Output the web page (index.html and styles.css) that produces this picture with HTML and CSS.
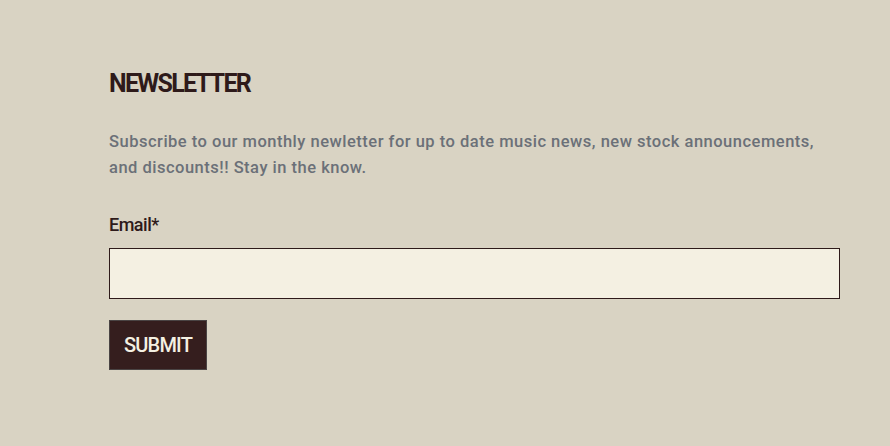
FILE: index.html
```html
<!DOCTYPE html>
<html>
<head>
<meta charset="utf-8">
<link rel="stylesheet" href="styles.css">
</head>
<body>
<section class="newsletter">
  <h2 class="title">NEWSLETTER</h2>
  <p class="lead">Subscribe to our monthly newletter for up to date music news, new stock announcements, and discounts!! Stay in the know.</p>
  <form class="form">
    <label class="label" for="email">Email*</label>
    <input class="input" id="email" type="email">
    <button class="btn" type="button">SUBMIT</button>
  </form>
</section>
</body>
</html>
```
FILE: styles.css
```css
html, body {
  margin: 0;
  padding: 0;
  background: #d9d3c3;
}
body {
  font-family: Roboto, "Liberation Sans", sans-serif;
}
.newsletter {
  padding: 68px 50px 0 109px;
}
.title {
  margin: 0;
  font-size: 25px;
  line-height: 32px;
  font-weight: 700;
  letter-spacing: -1.7px;
  color: #2e1a1a;
}
.lead {
  margin: 29px 0 0;
  max-width: 731px;
  font-size: 16.5px;
  line-height: 26px;
  font-weight: 500;
  letter-spacing: 0.5px;
  color: #6b7078;
}
.form {
  display: flex;
  flex-direction: column;
  align-items: flex-start;
  margin-top: 31px;
}
.label {
  font-size: 18px;
  line-height: 26px;
  font-weight: 500;
  letter-spacing: -0.5px;
  color: #2e1a1a;
}
.input {
  box-sizing: border-box;
  width: 731px;
  height: 51px;
  margin-top: 10px;
  border: 1px solid #2e1a1a;
  background: #f4f0e2;
  border-radius: 0;
  padding: 0 12px;
}
.btn {
  box-sizing: border-box;
  margin-top: 21px;
  width: 98px;
  height: 50px;
  background: #351e1e;
  border: 1px solid #4a4444;
  color: #f4f0e2;
  font-family: Roboto, "Liberation Sans", sans-serif;
  font-weight: 500;
  font-size: 20px;
  letter-spacing: -0.8px;
  padding: 0;
  border-radius: 0;
}
```
